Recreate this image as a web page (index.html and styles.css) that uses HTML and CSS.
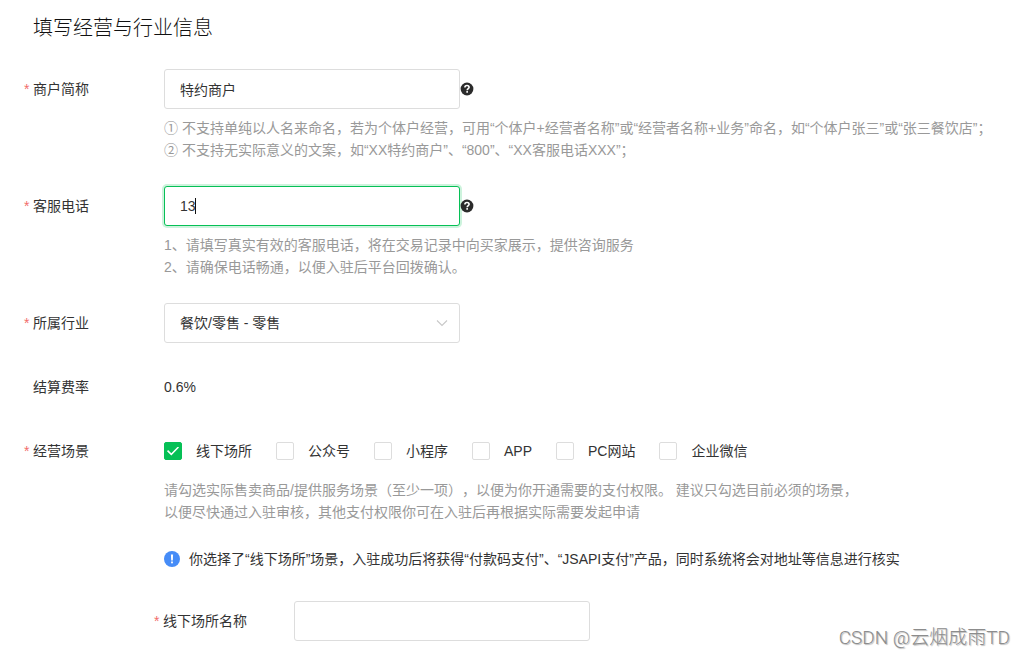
FILE: index.html
```html
<!DOCTYPE html>
<html lang="zh-CN">
<head>
<meta charset="utf-8">
<meta name="viewport" content="width=device-width, initial-scale=1">
<title>填写经营与行业信息</title>
<link rel="stylesheet" href="styles.css">
</head>
<body>
<main class="page">
  <h1 class="title">填写经营与行业信息</h1>
  <form class="form">
    <div class="row">
      <label class="label required" for="short-name">商户简称</label>
      <div class="content">
        <div class="control">
          <input class="field" id="short-name" type="text" value="特约商户">
          <svg class="help" viewBox="0 0 14 14" role="img" aria-label="帮助"><circle cx="7" cy="7" r="6.4" fill="#2b2b2b"/><path d="M4.9 5.5C4.9 4.2 5.8 3.5 7 3.5s2.1.7 2.1 1.8C9.1 6.5 7.2 6.6 7.2 8.2" fill="none" stroke="#fff" stroke-width="1.6"/><rect x="6.3" y="9.1" width="1.7" height="1.6" fill="#fff"/></svg>
        </div>
        <p class="hint">① 不支持单纯以人名来命名，若为个体户经营，可用“个体户+经营者名称”或“经营者名称+业务”命名，如“个体户张三”或“张三餐饮店”；<br>② 不支持无实际意义的文案，如“XX特约商户”、“800”、“XX客服电话XXX”；</p>
      </div>
    </div>
    <div class="row">
      <label class="label required" for="phone">客服电话</label>
      <div class="content">
        <div class="control">
          <input class="field field-active" id="phone" type="text" value="13">
          <svg class="help" viewBox="0 0 14 14" role="img" aria-label="帮助"><circle cx="7" cy="7" r="6.4" fill="#2b2b2b"/><path d="M4.9 5.5C4.9 4.2 5.8 3.5 7 3.5s2.1.7 2.1 1.8C9.1 6.5 7.2 6.6 7.2 8.2" fill="none" stroke="#fff" stroke-width="1.6"/><rect x="6.3" y="9.1" width="1.7" height="1.6" fill="#fff"/></svg>
          <span class="caret" aria-hidden="true"></span>
        </div>
        <p class="hint">1、请填写真实有效的客服电话，将在交易记录中向买家展示，提供咨询服务<br>2、请确保电话畅通，以便入驻后平台回拨确认。</p>
      </div>
    </div>
    <div class="row">
      <label class="label required" for="industry">所属行业</label>
      <div class="content">
        <div class="control">
          <select class="field" id="industry"><option>餐饮/零售 - 零售</option></select>
          <svg class="arrow" viewBox="0 0 12 8" aria-hidden="true"><path d="M1 1.5L6 6.5L11 1.5" fill="none" stroke="#c8c8c8" stroke-width="1.1"/></svg>
        </div>
      </div>
    </div>
    <div class="row">
      <span class="label">结算费率</span>
      <div class="content value">0.6%</div>
    </div>
    <div class="row">
      <span class="label required" id="scene">经营场景</span>
      <div class="content">
        <div class="checks" role="group" aria-labelledby="scene">
          <label class="check"><input class="box" type="checkbox" checked>线下场所</label>
          <label class="check"><input class="box" type="checkbox">公众号</label>
          <label class="check"><input class="box" type="checkbox">小程序</label>
          <label class="check"><input class="box" type="checkbox">APP</label>
          <label class="check"><input class="box" type="checkbox">PC网站</label>
          <label class="check"><input class="box" type="checkbox">企业微信</label>
        </div>
        <p class="hint">请勾选实际售卖商品/提供服务场景（至少一项），以便为你开通需要的支付权限。 建议只勾选目前必须的场景，<br>以便尽快通过入驻审核，其他支付权限你可在入驻后再根据实际需要发起申请</p>
        <p class="notice"><svg class="info" viewBox="0 0 16 16" aria-hidden="true"><circle cx="8" cy="8" r="8" fill="#468cf7"/><path d="M6.9 3.5h2.2l-.3 6H7.2z" fill="#fff"/><rect x="7.1" y="10.5" width="1.8" height="1.8" fill="#fff"/></svg><span>你选择了“线下场所”场景，入驻成功后将获得“付款码支付”、“JSAPI支付”产品，同时系统将会对地址等信息进行核实</span></p>
      </div>
    </div>
    <div class="row row-nested">
      <label class="label required" for="place">线下场所名称</label>
      <div class="content">
        <div class="control"><input class="field" id="place" type="text"></div>
      </div>
    </div>
  </form>
</main>
<div class="watermark">CSDN @云烟成雨TD</div>
</body>
</html>
```

FILE: styles.css
```css
* { box-sizing: border-box; }
body {
  margin: 0;
  background: #fff;
  color: #333;
  font: 14px/22px "Liberation Sans", "Noto Sans CJK SC", sans-serif;
  text-spacing-trim: space-all;
}
.page { padding: 12px 24px 15px; }
.title {
  margin: 0 0 25px;
  padding-left: 9px;
  color: #111;
  font-size: 20px;
  line-height: 32px;
  font-weight: 300;
}
.form { display: flex; flex-direction: column; gap: 24px; }
.row { display: grid; grid-template-columns: 140px minmax(0, 1fr); }
.row-nested { margin: 7px 0 0 130px; }
.label { padding-left: 9px; line-height: 40px; }
.required { padding-left: 0; }
.required::before {
  content: "*";
  display: inline-block;
  width: 9px;
  color: #f26d6a;
  line-height: 16px;
}
.control { position: relative; display: flex; align-items: center; }
.field {
  width: 296px;
  height: 40px;
  padding: 0 15px;
  border: 1px solid #ddd;
  border-radius: 3px;
  outline: 0;
  background: #fff;
  color: #333;
  font: inherit;
  appearance: none;
}
.field-active { border-color: #06c056; box-shadow: 0 0 0 2px #cdf3dd; }
.help { width: 14px; height: 14px; }
.caret {
  position: absolute;
  left: 31px;
  top: 12px;
  width: 1px;
  height: 16px;
  background: #111;
}
.arrow {
  position: absolute;
  left: 272px;
  top: 16px;
  width: 12px;
  height: 8px;
  pointer-events: none;
}
.hint { margin: 8px 0 0; padding-bottom: 1px; color: #999; }
.value { line-height: 40px; }
.checks { display: flex; flex-wrap: wrap; gap: 0 24px; }
.check { display: flex; align-items: center; gap: 14px; line-height: 40px; }
.box {
  appearance: none;
  width: 18px;
  height: 18px;
  margin: 0;
  border: 1px solid #ddd;
  border-radius: 2px;
  display: grid;
  place-items: center;
}
.box:checked { border-color: #06c056; background: #06c056; }
.box:checked::before {
  content: "";
  width: 12px;
  height: 9px;
  background: #fff;
  clip-path: polygon(0 52%, 9% 40%, 36% 75%, 91% 0, 100% 11%, 36% 100%);
}
.notice { display: flex; align-items: flex-start; gap: 9px; margin: 24px 0 0; }
.info { flex: none; width: 16px; height: 16px; margin-top: 3px; }
.watermark {
  position: absolute;
  right: 15px;
  bottom: 5px;
  color: #8c8c8c;
  font-family: Roboto, "Noto Sans CJK SC", sans-serif;
  font-weight: 300;
  font-size: 19px;
  line-height: 26px;
  text-shadow: 1px 1px 1px #bbb;
}
```
